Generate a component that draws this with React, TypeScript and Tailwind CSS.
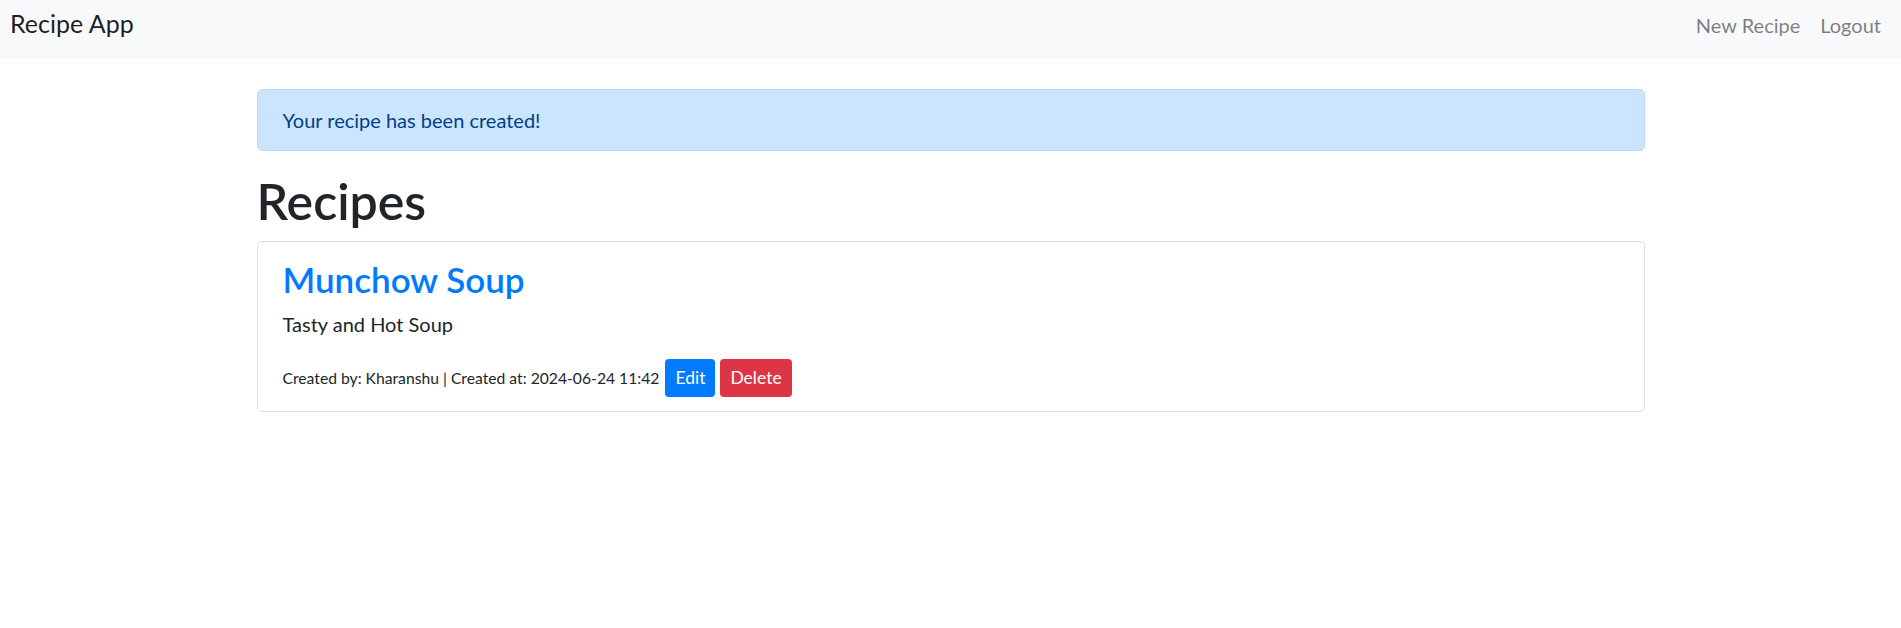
import React from 'react';

const font = { fontFamily: 'Lato, "Noto Sans", sans-serif' };

export default function App() {
  return (
    <div className="min-h-screen bg-white text-[#212529]" style={font}>
      <nav className="h-[59px] bg-[#f8f9fa] flex justify-between items-start px-[10px]">
        <a className="mt-[5px] text-[25px] leading-[37.5px] text-[rgba(0,0,0,0.9)]">Recipe App</a>
        <div className="flex mt-[10px]">
          <a className="px-[10px] text-[20px] leading-[30px] text-[rgba(0,0,0,0.5)]">New Recipe</a>
          <a className="px-[10px] text-[20px] leading-[30px] text-[rgba(0,0,0,0.5)]">Logout</a>
        </div>
      </nav>

      <main className="w-[1388px] mx-auto mt-[30px]">
        <div className="border border-[#b8daff] bg-[#cce5ff] text-[#004085] rounded-[5px] px-[25px] py-[15px] text-[20px] leading-[30px] mb-[20px]">
          Your recipe has been created!
        </div>

        <h1 className="text-[50px] leading-[60px] font-semibold mb-[10px]">Recipes</h1>

        <div className="border border-[rgba(0,0,0,0.125)] rounded-[5px] px-[25px] pt-[16px] pb-[14px]">
          <h3 className="text-[35px] leading-[42px] font-semibold text-[#007bff] mb-[9px]">Munchow Soup</h3>
          <p className="text-[20px] leading-[30px] mb-[20px]">Tasty and Hot Soup</p>
          <div className="flex items-center gap-[5px]">
            <small className="text-[15.7px] leading-[24px] mr-[1px]">
              Created by: Kharanshu | Created at: 2024-06-24 11:42
            </small>
            <button className="h-[38px] px-[10px] rounded-[4px] bg-[#007bff] text-white text-[17.5px] leading-[26px]">
              Edit
            </button>
            <button className="h-[38px] px-[10px] rounded-[4px] bg-[#dc3545] text-white text-[17.5px] leading-[26px]">
              Delete
            </button>
          </div>
        </div>
      </main>
    </div>
  );
}
